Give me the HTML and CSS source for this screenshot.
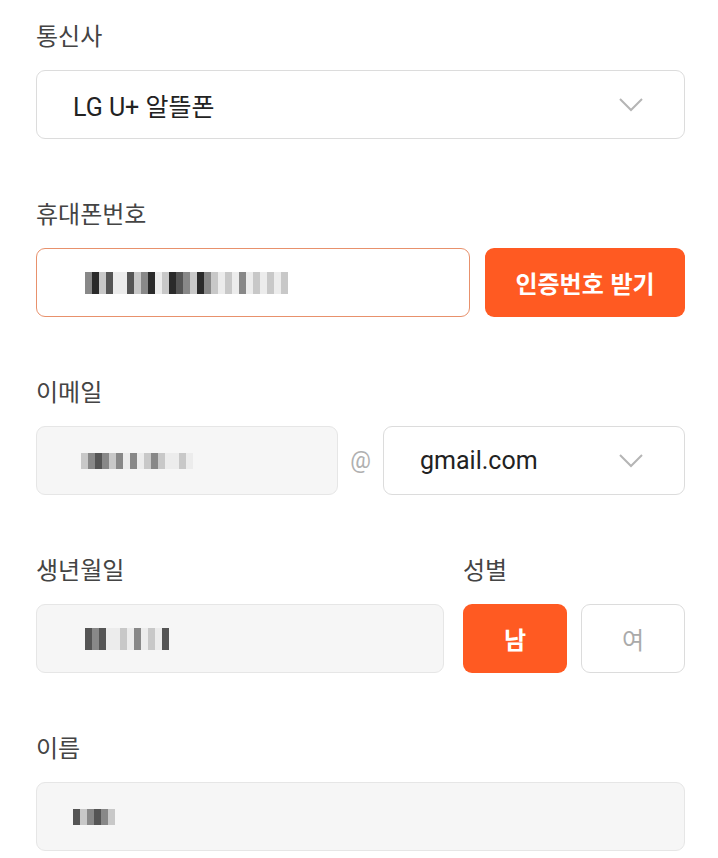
FILE: index.html
```html
<!DOCTYPE html>
<html lang="ko">
<head>
    <meta charset="UTF-8">
    <meta name="viewport" content="width=device-width, initial-scale=1.0">
    <title>회원정보</title>
    <link rel="stylesheet" href="styles.css">
</head>
<body>
    <div class="form">
        <!-- 통신사 -->
        <div class="field">
            <div class="label">통신사</div>
            <div class="box select">
                <span class="value">LG U+ 알뜰폰</span>
                <svg class="chevron" width="26" height="16" viewBox="0 0 26 16"><path d="M2 2 L13 13 L24 2" fill="none" stroke="#b5b5b5" stroke-width="2"/></svg>
            </div>
        </div>

        <!-- 휴대폰번호 -->
        <div class="field">
            <div class="label">휴대폰번호</div>
            <div class="row">
                <div class="box focus grow">
                    <span class="mosaic">
                        <i class="c3"></i><i class="c1"></i><i class="c4"></i><i class="c2"></i><i class="c5"></i><i class="c5"></i><i class="c2"></i><i class="c4"></i><i class="c3"></i><i class="c1"></i><i class="c5"></i><i class="c4"></i><i class="c1"></i><i class="c2"></i><i class="c3"></i><i class="c4"></i><i class="c1"></i><i class="c3"></i><i class="c4"></i><i class="c5"></i><i class="c4"></i><i class="c5"></i><i class="c3"></i><i class="c5"></i><i class="c4"></i><i class="c5"></i><i class="c4"></i><i class="c5"></i><i class="c4"></i>
                    </span>
                </div>
                <button class="btn-primary verify">인증번호 받기</button>
            </div>
        </div>

        <!-- 이메일 -->
        <div class="field">
            <div class="label">이메일</div>
            <div class="row email-row">
                <div class="box filled email-id">
                    <span class="mosaic small">
                        <i class="c4"></i><i class="c3"></i><i class="c2"></i><i class="c3"></i><i class="c4"></i><i class="c3"></i><i class="c5"></i><i class="c3"></i><i class="c5"></i><i class="c4"></i><i class="c3"></i><i class="c4"></i><i class="c5"></i><i class="c5"></i><i class="c4"></i><i class="c5"></i>
                    </span>
                </div>
                <span class="at">@</span>
                <div class="box select email-domain">
                    <span class="value">gmail.com</span>
                    <svg class="chevron" width="26" height="16" viewBox="0 0 26 16"><path d="M2 2 L13 13 L24 2" fill="none" stroke="#b5b5b5" stroke-width="2"/></svg>
                </div>
            </div>
        </div>

        <!-- 생년월일 / 성별 -->
        <div class="field split">
            <div class="birth">
                <div class="label">생년월일</div>
                <div class="box filled">
                    <span class="mosaic">
                        <i class="c2"></i><i class="c3"></i><i class="c2"></i><i class="c5"></i><i class="c5"></i><i class="c4"></i><i class="c5"></i><i class="c3"></i><i class="c5"></i><i class="c4"></i><i class="c5"></i><i class="c2"></i>
                    </span>
                </div>
            </div>
            <div class="gender">
                <div class="label">성별</div>
                <div class="gender-buttons">
                    <button class="btn-primary gender-btn">남</button>
                    <button class="gender-btn off">여</button>
                </div>
            </div>
        </div>

        <!-- 이름 -->
        <div class="field">
            <div class="label">이름</div>
            <div class="box filled">
                <span class="mosaic small">
                    <i class="c2"></i><i class="c4"></i><i class="c3"></i><i class="c2"></i><i class="c3"></i><i class="c4"></i>
                </span>
            </div>
        </div>
    </div>
</body>
</html>
```

FILE: styles.css
```css
body {
    margin: 0;
    padding: 0;
    background-color: #fff;
    font-family: "Noto Sans CJK KR", "Noto Sans", sans-serif;
    color: #222;
    overflow: hidden;
}

.form {
    padding: 20px 33px 0 36px;
}

/* Fields */
.field {
    margin-bottom: 59px;
}

.field:last-child {
    margin-bottom: 0;
}

.label {
    height: 30px;
    line-height: 30px;
    font-size: 24px;
    color: #444;
    margin-bottom: 20px;
}

.box {
    box-sizing: border-box;
    height: 69px;
    border: 1px solid #dcdcdc;
    border-radius: 9px;
    display: flex;
    align-items: center;
    padding: 0 36px;
    background-color: #fff;
}

.box.filled {
    background-color: #f6f6f6;
    border-color: #e6e6e6;
}

.box.focus {
    border-color: #e8916c;
}

.select {
    justify-content: space-between;
    padding-right: 40px;
}

.select .value {
    font-family: Roboto, "Noto Sans CJK KR", sans-serif;
    font-size: 25px;
    color: #222;
}

.chevron {
    display: block;
}

.row {
    display: flex;
    align-items: center;
}

.grow {
    flex: 1;
}

/* Buttons */
.btn-primary {
    border: none;
    border-radius: 9px;
    background-color: #ff5a22;
    color: #fff;
    font-family: "Noto Sans CJK KR", sans-serif;
    font-weight: bold;
    font-size: 24px;
    cursor: pointer;
}

.verify {
    width: 200px;
    height: 69px;
    margin-left: 15px;
    padding: 0;
}

/* Email */
.email-id {
    width: 302px;
    padding-left: 44px;
}

.at {
    width: 45px;
    text-align: center;
    font-family: Roboto, sans-serif;
    font-size: 23px;
    color: #b0b0b0;
}

.email-domain {
    flex: 1;
}

/* Birth / gender */
.split {
    display: flex;
}

.birth {
    width: 409px;
}

.gender {
    margin-left: 19px;
    flex: 1;
}

.gender-buttons {
    display: flex;
    gap: 14px;
}

.gender-btn {
    width: 104px;
    height: 69px;
    padding: 0;
    font-size: 24px;
}

.gender-btn.off {
    background-color: #fff;
    border: 1px solid #dcdcdc;
    border-radius: 9px;
    color: #aaa;
    font-family: "Noto Sans CJK KR", sans-serif;
    font-weight: normal;
}

/* Masked values */
.mosaic {
    display: flex;
    margin-left: 12px;
    height: 22px;
}

.mosaic.small {
    margin-left: 0;
    height: 16px;
}

.mosaic i {
    display: block;
    width: 7px;
    height: 100%;
}

.mosaic .c1 { background-color: #2a2a2a; }
.mosaic .c2 { background-color: #555; }
.mosaic .c3 { background-color: #888; }
.mosaic .c4 { background-color: #c8c8c8; }
.mosaic .c5 { background-color: #ececec; }
```
